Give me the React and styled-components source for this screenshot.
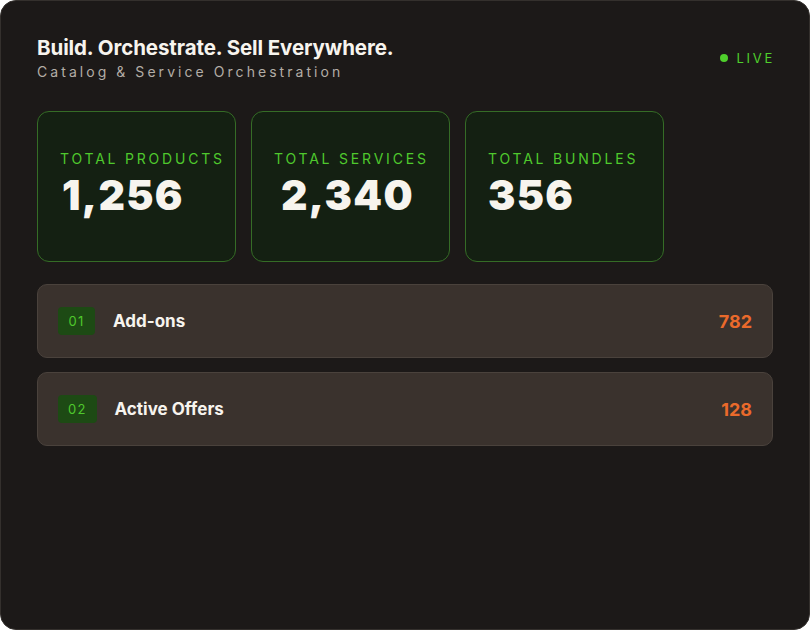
import React from "react";
import styled, { createGlobalStyle } from "styled-components";

const GlobalStyle = createGlobalStyle`
  html, body {
    margin: 0;
    padding: 0;
    background: #ffffff;
  }
  * {
    box-sizing: border-box;
  }
`;

const stats = [
  { label: "Total Products", value: "1,256", indent: 2 },
  { label: "Total Services", value: "2,340", indent: 7 },
  { label: "Total Bundles", value: "356", indent: 0 },
];

const rows = [
  { index: "01", name: "Add-ons", count: "782" },
  { index: "02", name: "Active Offers", count: "128" },
];

const App = () => {
  return (
    <>
      <GlobalStyle />
      <Panel>
        <Header>
          <div>
            <Title>Build. Orchestrate. Sell Everywhere.</Title>
            <Subtitle>Catalog &amp; Service Orchestration</Subtitle>
          </div>
          <Live>
            <LiveDot />
            LIVE
          </Live>
        </Header>

        <StatGrid>
          {stats.map((s) => (
            <StatCard key={s.label}>
              <StatLabel>{s.label}</StatLabel>
              <StatValue $indent={s.indent}>{s.value}</StatValue>
            </StatCard>
          ))}
        </StatGrid>

        <RowList>
          {rows.map((r) => (
            <Row key={r.index}>
              <Badge>{r.index}</Badge>
              <RowName>{r.name}</RowName>
              <RowCount>{r.count}</RowCount>
            </Row>
          ))}
        </RowList>
      </Panel>
    </>
  );
};

const Panel = styled.div`
  width: 810px;
  height: 630px;
  background-color: #1c1918;
  border: 1px solid #34302d;
  border-radius: 16px;
  padding: 36px 36px 0 36px;
  font-family: Inter, "Liberation Sans", sans-serif;
  color: #f7f4ee;
`;

const Header = styled.div`
  display: flex;
  justify-content: space-between;
  align-items: flex-start;
`;

const Title = styled.h1`
  margin: 0;
  font-size: 20.5px;
  font-weight: 700;
  letter-spacing: -0.1px;
  line-height: 22px;
  color: #f7f4ee;
`;

const Subtitle = styled.div`
  margin-top: 4px;
  font-size: 14px;
  letter-spacing: 3.05px;
  color: #b3ada6;
  line-height: 18px;
`;

const Live = styled.div`
  display: flex;
  align-items: center;
  gap: 9px;
  margin-top: 13px;
  margin-right: -2px;
  font-size: 13px;
  letter-spacing: 2.7px;
  color: #4fcf2c;
`;

const LiveDot = styled.span`
  width: 8px;
  height: 8px;
  border-radius: 50%;
  background-color: #4fcf2c;
`;

const StatGrid = styled.div`
  display: flex;
  gap: 15px;
  margin-top: 30px;
`;

const StatCard = styled.div`
  width: 199px;
  height: 151px;
  background-color: #142012;
  border: 1px solid #356c26;
  border-radius: 12px;
  padding: 38px 0 0 22px;
`;

const StatLabel = styled.div`
  font-size: 14px;
  letter-spacing: 2.8px;
  text-transform: uppercase;
  color: #4fc92d;
  white-space: nowrap;
  line-height: 17px;
`;

const StatValue = styled.div`
  margin-top: 4px;
  margin-left: ${(p) => p.$indent}px;
  font-size: 41px;
  font-weight: 900;
  letter-spacing: 1.3px;
  line-height: 48px;
  color: #f7f4ee;
`;

const RowList = styled.div`
  display: flex;
  flex-direction: column;
  gap: 14px;
  margin-top: 22px;
`;

const Row = styled.div`
  display: flex;
  align-items: center;
  height: 74px;
  background-color: #3a322d;
  border: 1px solid #4a423c;
  border-radius: 10px;
  padding: 0 20px;
`;

const Badge = styled.span`
  min-width: 37px;
  height: 28px;
  padding: 0 10px;
  display: flex;
  align-items: center;
  justify-content: center;
  border-radius: 4px;
  background-color: #1d4a14;
  color: #4fc82c;
  font-size: 13px;
  letter-spacing: 1.2px;
`;

const RowName = styled.span`
  margin-left: 18px;
  font-size: 17px;
  font-weight: 700;
  color: #f7f4ee;
`;

const RowCount = styled.span`
  margin-left: auto;
  font-size: 18px;
  font-weight: 700;
  color: #ea6a2b;
`;

export default App;
